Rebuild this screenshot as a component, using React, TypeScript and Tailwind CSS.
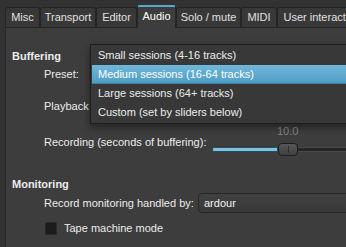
const tabs = [
  { label: "Misc", w: "w-[35px]" },
  { label: "Transport", w: "w-[56px]" },
  { label: "Editor", w: "w-[41px]" },
  { label: "Audio", w: "w-[39px]", active: true },
  { label: "Solo / mute", w: "w-[65px]" },
  { label: "MIDI", w: "w-[36px]" },
  { label: "User interaction", w: "w-[90px]" },
];

const presets = [
  "Small sessions (4-16 tracks)",
  "Medium sessions (16-64 tracks)",
  "Large sessions (64+ tracks)",
  "Custom (set by sliders below)",
];

const Slider = () => (
  <div className="flex items-center h-[14px]">
    <div className="w-[66px] h-[5px] bg-[#80c2df] border border-[#2c4a58] rounded-l-[2px]" />
    <div className="relative w-[20px] h-[13px] rounded-[4px] border border-[#1d1d1d] bg-gradient-to-b from-[#575757] to-[#3f3f3f] shrink-0">
      <div className="absolute left-[9px] top-[2px] w-px h-[7px] bg-[#2c2c2c]" />
    </div>
    <div className="flex-1 h-[5px] bg-[#262626] border-y border-[#4a4a4a]" />
  </div>
);

const App = () => {
  return (
    <div className="relative w-[346px] h-[247px] overflow-hidden bg-[#323232] font-['Liberation_Sans',Arial,sans-serif] text-[11px] leading-[13px] text-[#ececec]">
      <div className="flex flex-col h-full pl-[5px] pt-[4px]">
        <div className="flex items-end h-[23px] shrink-0">
          {tabs.map((t) =>
            t.active ? (
              <div
                key={t.label}
                className={`${t.w} h-[23px] shrink-0 flex items-center justify-center border-t-2 border-x border-t-[#5aa6cc] border-x-[#262626] rounded-t-[3px] bg-[#3d3d3d] text-white pb-[2px] -mb-px relative z-10`}
              >
                {t.label}
              </div>
            ) : (
              <div
                key={t.label}
                className={`${t.w} h-[20px] shrink-0 flex items-center justify-center border border-b-0 border-[#242424] rounded-t-[3px] bg-[#383838] text-[#e0e0e0] whitespace-nowrap overflow-hidden`}
              >
                {t.label}
              </div>
            )
          )}
        </div>
        <div className="flex-1 bg-[#3d3d3d] border-l border-t border-[#262626] pl-[6px] pt-[19px] overflow-hidden">
          <div className="h-[18px] flex items-center font-bold">Buffering</div>
          <div className="h-[18px] flex items-center pl-[32px]">Preset:</div>
          <div className="h-[18px] mt-[14px] flex items-center pl-[32px]">Playback</div>
          <div className="flex mt-[10px] h-[32px] pl-[32px]">
            <div className="mt-[11px] w-[168px] shrink-0 whitespace-nowrap">Recording (seconds of buffering):</div>
            <div className="flex-1 flex flex-col">
              <div className="h-[12px] leading-[12px] pl-[65px] text-[#858585]">10.0</div>
              <div className="mt-[5px]">
                <Slider />
              </div>
            </div>
          </div>
          <div className="h-[18px] mt-[18px] flex items-center font-bold">Monitoring</div>
          <div className="flex items-center h-[20px]">
            <div className="w-[186px] pl-[32px] shrink-0 whitespace-nowrap">Record monitoring handled by:</div>
            <div className="w-[180px] shrink-0 h-[20px] flex items-center pl-[5px] rounded-[4px] border border-[#262626] bg-gradient-to-b from-[#414141] to-[#393939] text-[#f2f2f2]">
              ardour
            </div>
          </div>
          <div className="flex items-center h-[19px] mt-[6px] pl-[33px] gap-[7px]">
            <div className="w-[12px] h-[13px] bg-[#1c1c1c] border border-[#2a2a2a] rounded-[1px]" />
            <span>Tape machine mode</span>
          </div>
        </div>
      </div>

      <div className="absolute left-[90px] top-[44px] w-[280px] bg-[#383838] border border-[#1e1e1e] p-px shadow-[0_3px_8px_rgba(0,0,0,0.45)] z-20">
        {presets.map((p, i) => (
          <div
            key={p}
            className={
              i === 1
                ? "h-[19px] flex items-center pl-[6px] text-white bg-gradient-to-b from-[#70b8da] to-[#4f9dc5] border-b border-[#3d7fa3]"
                : "h-[19px] flex items-center pl-[6px] text-[#ececec]"
            }
          >
            {p}
          </div>
        ))}
      </div>
    </div>
  );
};

export default App;
